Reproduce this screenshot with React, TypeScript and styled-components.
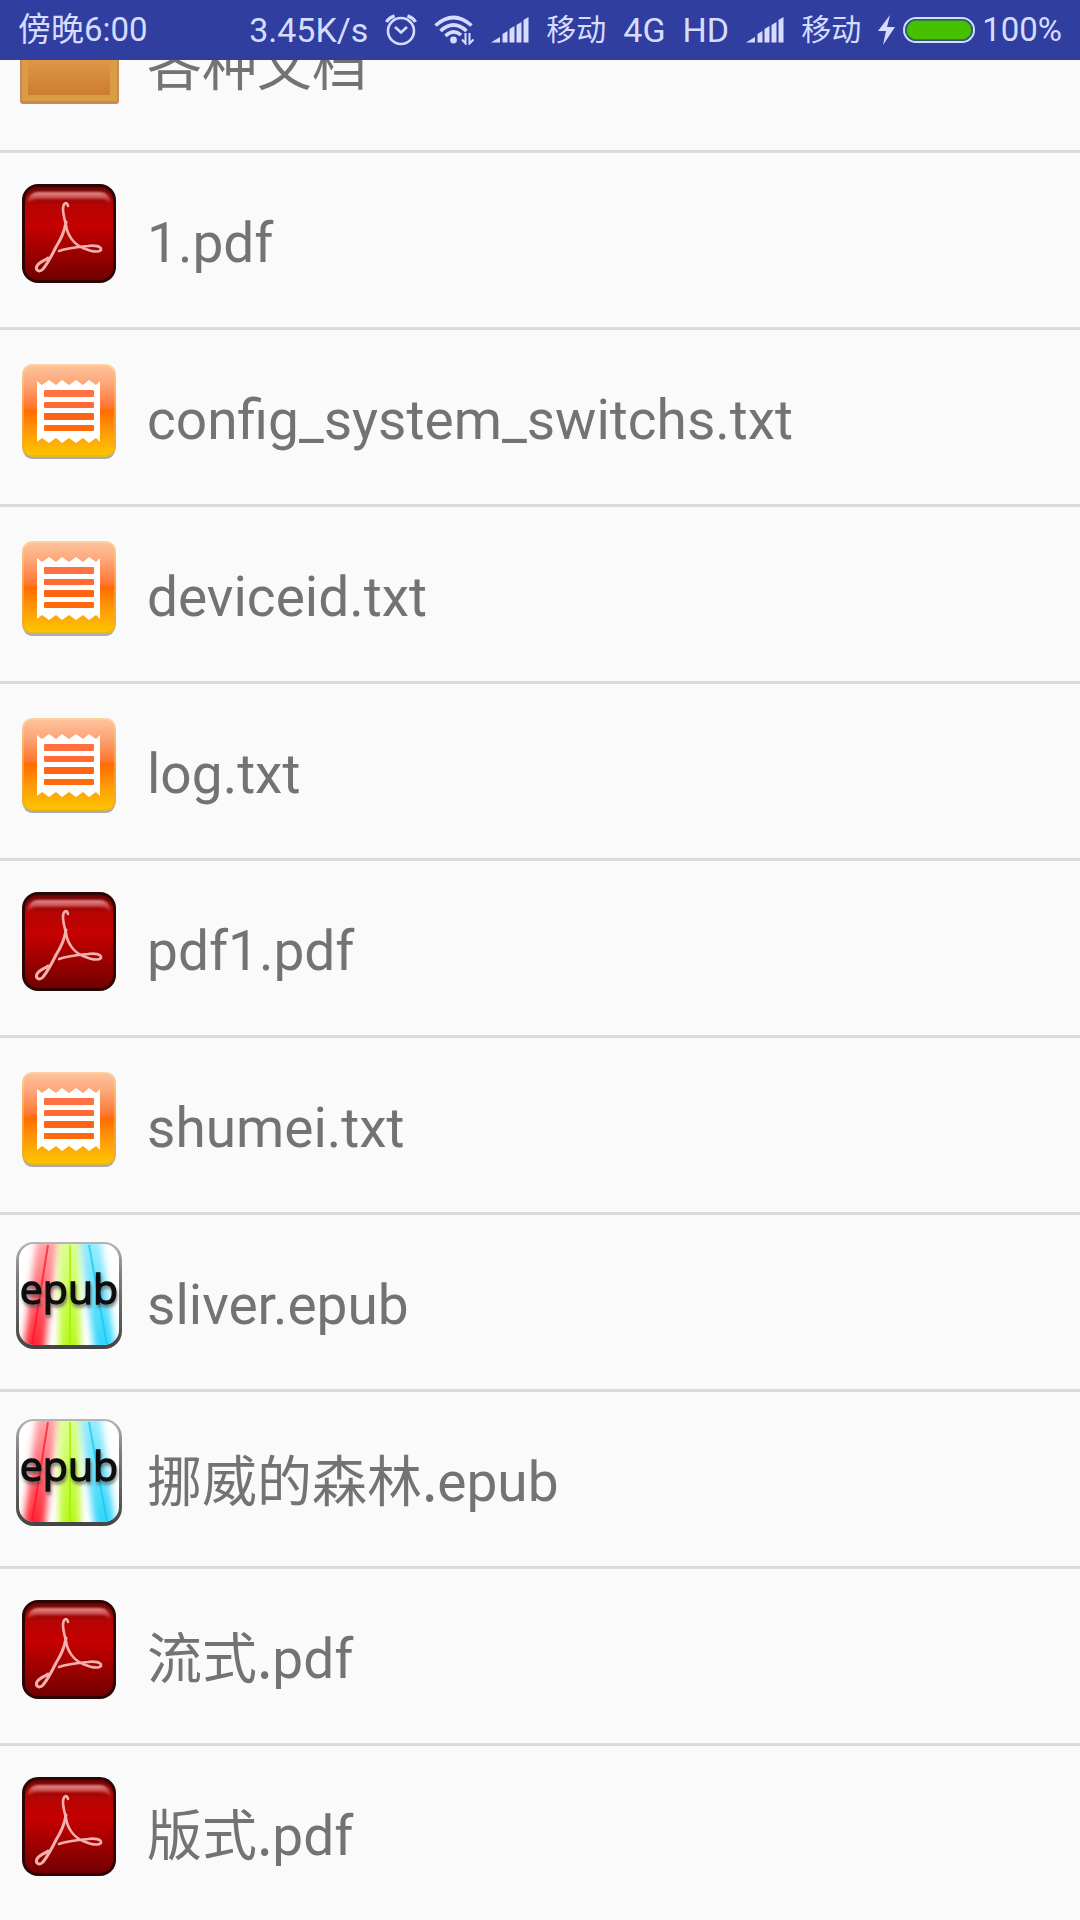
import React from "react";
import styled, { createGlobalStyle } from "styled-components";

const latin = `Roboto, "Noto Sans CJK SC", sans-serif`;
const han = `"Noto Sans CJK SC", Roboto, sans-serif`;

const GlobalStyle = createGlobalStyle`
  * { box-sizing: border-box; }
  body { margin: 0; background: #fafafa; font-family: ${latin}; }
`;

const Screen = styled.div`
  display: flex;
  flex-direction: column;
  height: 100vh;
  overflow: hidden;
`;

const StatusBar = styled.header`
  display: flex;
  align-items: center;
  justify-content: space-between;
  flex: none;
  height: 60px;
  padding: 0 18px;
  background: #303f9f;
  color: #d6dcff;
  font-size: 34px;
  line-height: 40px;
  white-space: nowrap;
`;

const Clock = styled.time`
  font-size: 33px;
`;

const Indicators = styled.div`
  display: flex;
  align-items: center;
  gap: 17px;
`;

const Carrier = styled.span`
  font-size: 30px;
`;

const Power = styled.div`
  display: flex;
  align-items: center;
  gap: 7px;
  font-size: 33px;
`;

const Glyph = styled.svg`
  display: block;
  flex: none;
`;

const PaintSheet = styled.svg`
  display: block;
  flex: none;
  width: 0;
  height: 0;
`;

const Viewport = styled.main`
  flex: 1;
  min-height: 0;
  overflow: hidden;
`;

const FileList = styled.ul`
  list-style: none;
  margin: -84px 0 0;
  padding: 0;
`;

const FileItem = styled.li`
  border-bottom: 3px solid #dadada;
`;

const FileButton = styled.button`
  display: flex;
  align-items: flex-start;
  gap: 24px;
  width: 100%;
  height: 174px;
  padding: 26px 15px;
  border: 0;
  background: transparent;
  color: #737373;
  font-family: inherit;
  font-size: 55px;
  line-height: 64px;
  text-align: left;
  cursor: pointer;
`;

const FileName = styled.span`
  padding-top: 32px;
  white-space: nowrap;
`;

const Han = styled.span`
  font-family: ${han};
  line-height: 1;
`;

const PdfIcon = () => (
  <Glyph width="108" height="108" viewBox="0 0 108 108" aria-hidden="true">
    <rect x="7" y="5" width="94" height="99" rx="16" fill="#2c0505" />
    <rect x="10" y="8" width="88" height="93" rx="13" fill="url(#pdfBody)" />
    <path d="M12 25 Q13 13 24 13 H84 Q95 13 96 25 Q92 20 84 20 H24 Q16 20 12 25Z" fill="url(#pdfShine)" filter="url(#pdfSoft)" />
    <g fill="none" stroke="#f3b0ac" strokeLinecap="round" strokeLinejoin="round">
      <path d="M53 27 C52 22 48 24 48 30 C48 37 51 43 51 49" strokeWidth="2.6" />
      <path d="M51 43 C50 50 46 60 41 68 C37 76 33 84 28 90 C24 94 20 91 22 87 C24 83 29 82 33 79" strokeWidth="3" />
      <path d="M51 46 C52 55 58 65 68 69 C75 72 83 74 86 71 C87 67 79 66 73 67 C62 68 52 69 44 72" strokeWidth="2.6" />
    </g>
  </Glyph>
);

const TxtIcon = () => (
  <Glyph width="108" height="108" viewBox="0 0 108 108" aria-hidden="true">
    <rect x="8" y="10" width="92" height="93" rx="9" fill="#a9a9b8" />
    <rect x="7" y="8" width="94" height="93" rx="10" fill="url(#txtRim)" />
    <rect x="9" y="10" width="90" height="89" rx="8" fill="url(#txtBody)" />
    <path
      d="M22 25 L27 29 L34 24 L41 29 L47 24 L54 29 L61 24 L68 29 L74 24 L81 29 L85 25 V86 L81 82 L74 87 L68 82 L61 87 L54 82 L47 87 L41 82 L34 87 L27 82 L22 86Z"
      fill="#fff"
    />
    <rect x="29" y="34" width="50" height="7" rx="1" fill="#ff7043" />
    <rect x="29" y="46" width="50" height="6" rx="1" fill="#ff6a35" />
    <rect x="29" y="57" width="50" height="7" rx="1" fill="#ff6414" />
    <rect x="29" y="69" width="50" height="6" rx="1" fill="#ff6a0c" />
  </Glyph>
);

const EpubIcon = () => (
  <Glyph width="108" height="108" viewBox="0 0 108 108" aria-hidden="true">
    <rect x="1" y="1" width="106" height="107" rx="18" fill="url(#epubRim)" />
    <rect x="4" y="3" width="100" height="101" rx="15" fill="#fff" />
    <g clipPath="url(#epubClip)">
      <g filter="url(#epubSoft)" strokeWidth="21">
        <path d="M33 -8 L18 116" stroke="url(#epubRed)" />
        <path d="M54 -8 L55 116" stroke="url(#epubGreen)" />
        <path d="M74 -8 L91 116" stroke="url(#epubBlue)" />
      </g>
      <path d="M33 4 L17 104" stroke="#ff1028" strokeOpacity="0.7" strokeWidth="2" />
      <path d="M55 4 V104" stroke="#a4f000" strokeOpacity="0.8" strokeWidth="2" />
      <path d="M74 4 L92 104" stroke="#10c8f0" strokeOpacity="0.7" strokeWidth="2" />
    </g>
    <text
      x="54"
      y="63"
      fill="#080808"
      stroke="#080808"
      strokeWidth="1.4"
      fontFamily="'Open Sans', 'Noto Sans', sans-serif"
      fontSize="41"
      textAnchor="middle"
      filter="url(#epubShade)"
    >
      epub
    </text>
  </Glyph>
);

const FolderIcon = () => (
  <Glyph width="108" height="108" viewBox="0 0 108 108" aria-hidden="true">
    <path d="M5 14 H42 L50 22 H104 V99 Q104 102 101 102 H8 Q5 102 5 99Z" fill="#c58a5a" />
    <path d="M7 24 H102 V99 H7Z" fill="#dc9c45" />
    <path d="M13 30 H95 V93 H13Z" fill="url(#folderBody)" />
  </Glyph>
);

const Defs = () => (
  <defs>
    <linearGradient id="pdfBody" x1="0" y1="0" x2="0" y2="1">
      <stop offset="0" stopColor="#6a0404" />
      <stop offset="0.2" stopColor="#b80404" />
      <stop offset="0.42" stopColor="#c60000" />
      <stop offset="1" stopColor="#720000" />
    </linearGradient>
    <linearGradient id="pdfShine" x1="0" y1="0" x2="0" y2="1">
      <stop offset="0" stopColor="#ee9a9a" />
      <stop offset="1" stopColor="#d03030" stopOpacity="0.4" />
    </linearGradient>
    <linearGradient id="txtBody" x1="0" y1="0" x2="0" y2="1">
      <stop offset="0" stopColor="#fdc29a" />
      <stop offset="0.2" stopColor="#fda578" />
      <stop offset="0.46" stopColor="#ff7630" />
      <stop offset="0.5" stopColor="#ff6c00" />
      <stop offset="0.75" stopColor="#fe9c08" />
      <stop offset="1" stopColor="#fdc400" />
    </linearGradient>
    <linearGradient id="txtRim" x1="0" y1="0" x2="0" y2="1">
      <stop offset="0" stopColor="#fcd3a0" />
      <stop offset="0.5" stopColor="#fb9838" />
      <stop offset="1" stopColor="#e9b620" />
    </linearGradient>
    <linearGradient id="epubRim" x1="0" y1="0" x2="0" y2="1">
      <stop offset="0" stopColor="#b5b5b5" />
      <stop offset="0.3" stopColor="#808080" />
      <stop offset="1" stopColor="#444" />
    </linearGradient>
    <linearGradient id="epubRed" gradientUnits="userSpaceOnUse" x1="0" y1="0" x2="0" y2="108">
      <stop offset="0" stopColor="#ffa8ac" />
      <stop offset="1" stopColor="#ff2030" />
    </linearGradient>
    <linearGradient id="epubGreen" gradientUnits="userSpaceOnUse" x1="0" y1="0" x2="0" y2="108">
      <stop offset="0" stopColor="#deff90" />
      <stop offset="1" stopColor="#b4f818" />
    </linearGradient>
    <linearGradient id="epubBlue" gradientUnits="userSpaceOnUse" x1="0" y1="0" x2="0" y2="108">
      <stop offset="0" stopColor="#98ecff" />
      <stop offset="1" stopColor="#30d4fc" />
    </linearGradient>
    <linearGradient id="folderBody" x1="0" y1="0" x2="0" y2="1">
      <stop offset="0" stopColor="#e8b060" />
      <stop offset="0.4" stopColor="#df9a4a" />
      <stop offset="1" stopColor="#cd7c2f" />
    </linearGradient>
    <filter id="pdfSoft">
      <feGaussianBlur stdDeviation="1" />
    </filter>
    <filter id="epubSoft" filterUnits="userSpaceOnUse" x="-20" y="-20" width="150" height="150">
      <feGaussianBlur stdDeviation="3.5" />
    </filter>
    <filter id="epubShade">
      <feDropShadow dx="1" dy="3" stdDeviation="1.5" floodColor="#444" floodOpacity="0.6" />
    </filter>
    <clipPath id="epubClip">
      <rect x="4" y="3" width="100" height="101" rx="15" />
    </clipPath>
  </defs>
);

const AlarmIcon = () => (
  <Glyph width="32" height="32" viewBox="0 0 32 32" fill="none" stroke="currentColor" aria-label="闹钟">
    <circle cx="16" cy="17" r="13" strokeWidth="2.6" />
    <path d="M10 13 L16 18.5 L22 13" strokeWidth="2.6" />
    <path d="M1.5 8 Q4 3.5 9.5 1.8 M30.5 8 Q28 3.5 22.5 1.8" strokeWidth="3.4" />
  </Glyph>
);

const WifiIcon = () => (
  <Glyph width="40" height="30" viewBox="0 0 40 30" fill="none" stroke="currentColor" aria-label="WLAN">
    <path d="M1.5 10.5 Q19.5 -5.5 37.5 10.5" strokeWidth="3.6" />
    <path d="M6.5 16 Q19.5 4 32.5 16" strokeWidth="3.6" />
    <path d="M11.5 21 Q19.5 13.5 27 20" strokeWidth="3.6" />
    <circle cx="19.5" cy="25" r="3.4" fill="currentColor" stroke="none" />
    <path d="M31.5 18 V28.5 L28 24.5 M35.5 28.5 V18 M35.5 19 V28.5 L39.5 24.5" strokeWidth="2" />
  </Glyph>
);

const SignalIcon = () => (
  <Glyph width="38" height="26" viewBox="0 0 38 26" fill="currentColor" aria-label="信号">
    <path d="M0 25.5 L9 20 V25.5Z M11.5 25.5 V17 L16.5 14 V25.5Z M18.5 25.5 V12 L23.5 9 V25.5Z M25.5 25.5 V8 L30.5 5 V25.5Z M32.5 25.5 V3 L37.5 0 V25.5Z" />
  </Glyph>
);

const BoltIcon = () => (
  <Glyph width="18" height="30" viewBox="0 0 18 30" fill="currentColor" aria-label="充电中">
    <path d="M12 0 L0 16 H8 L5 30 L17 12 H9Z" />
  </Glyph>
);

const BatteryIcon = () => (
  <Glyph width="72" height="26" viewBox="0 0 72 26" aria-label="电量">
    <rect x="1" y="1" width="70" height="24" rx="12" fill="#303f9f" stroke="currentColor" strokeWidth="2" />
    <rect x="3" y="3" width="66" height="20" rx="10" fill="#47c000" stroke="#2c6b62" strokeWidth="1.6" />
  </Glyph>
);

const icons = { folder: FolderIcon, pdf: PdfIcon, txt: TxtIcon, epub: EpubIcon };

type FileEntry = { kind: keyof typeof icons; han?: string; name?: string };

const files: FileEntry[] = [
  { kind: "folder", han: "各种文档" },
  { kind: "pdf", name: "1.pdf" },
  { kind: "txt", name: "config_system_switchs.txt" },
  { kind: "txt", name: "deviceid.txt" },
  { kind: "txt", name: "log.txt" },
  { kind: "pdf", name: "pdf1.pdf" },
  { kind: "txt", name: "shumei.txt" },
  { kind: "epub", name: "sliver.epub" },
  { kind: "epub", han: "挪威的森林.", name: "epub" },
  { kind: "pdf", han: "流式.", name: "pdf" },
  { kind: "pdf", han: "版式.", name: "pdf" },
];

export default function App() {
  return (
    <Screen>
      <GlobalStyle />
      <PaintSheet aria-hidden="true">
        <Defs />
      </PaintSheet>
      <StatusBar>
        <Clock>傍晚6:00</Clock>
        <Indicators>
          <span>3.45K/s</span>
          <AlarmIcon />
          <WifiIcon />
          <SignalIcon />
          <Carrier>移动</Carrier>
          <span>4G</span>
          <span>HD</span>
          <SignalIcon />
          <Carrier>移动</Carrier>
          <Power>
            <BoltIcon />
            <BatteryIcon />
            <span>100%</span>
          </Power>
        </Indicators>
      </StatusBar>
      <Viewport>
        <FileList>
          {files.map(({ kind, han: hanPart, name }, index) => {
            const Icon = icons[kind];
            return (
              <FileItem key={index}>
                <FileButton type="button">
                  <Icon />
                  <FileName>
                    {hanPart && <Han>{hanPart}</Han>}
                    {name}
                  </FileName>
                </FileButton>
              </FileItem>
            );
          })}
        </FileList>
      </Viewport>
    </Screen>
  );
}
